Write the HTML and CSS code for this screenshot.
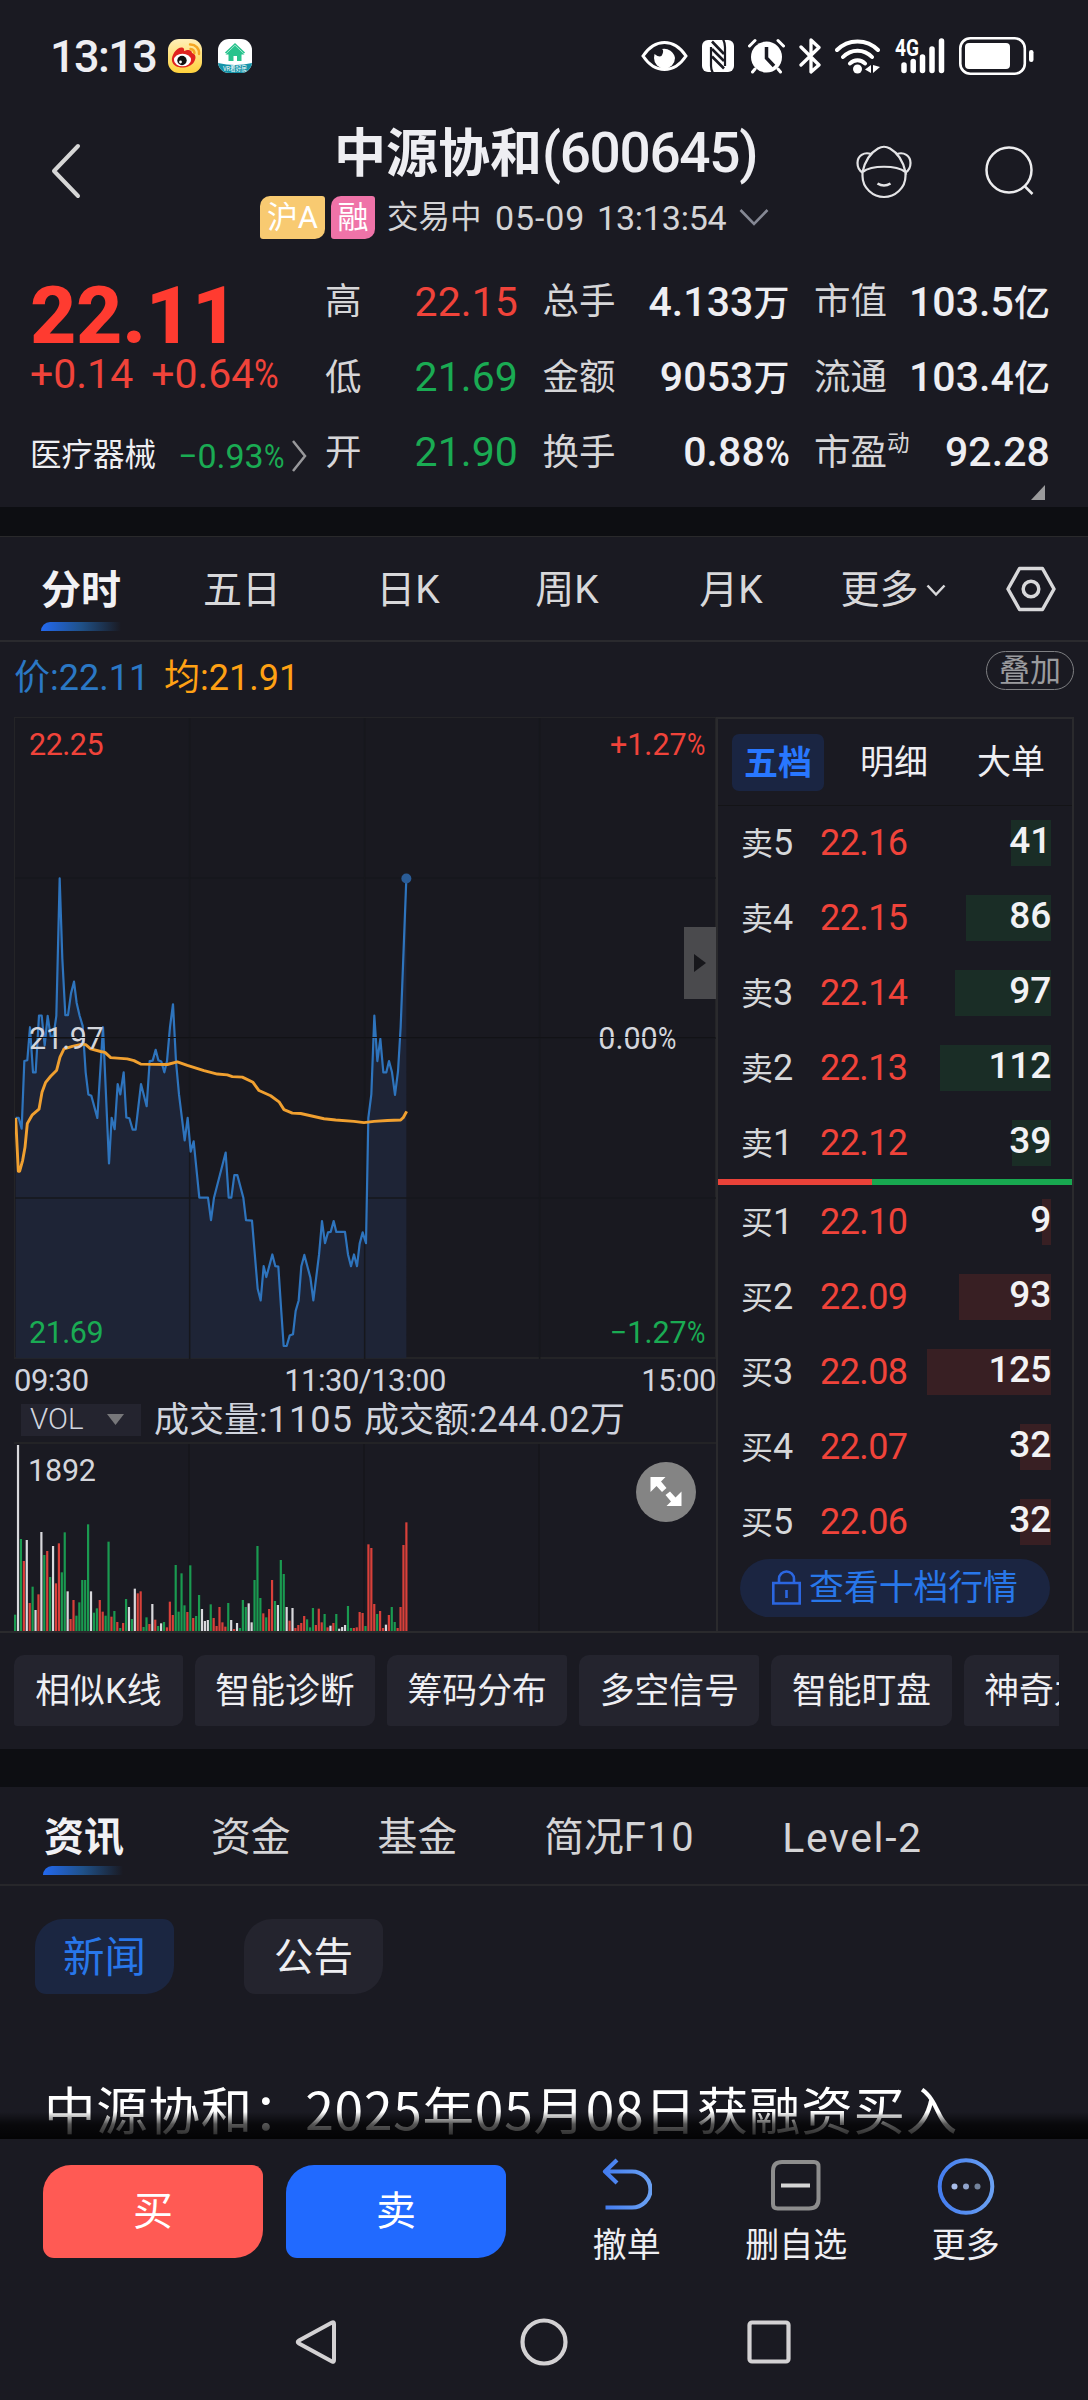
FILE: index.html
```html
<!DOCTYPE html>
<html lang="zh-CN">
<head>
<meta charset="utf-8">
<title>中源协和(600645)</title>
<link rel="stylesheet" href="styles.css">
</head>
<body>
<div class="phone">
  <div class="status">
    <span class="clock">13:13</span>
    <svg class="app" width="34" height="34" viewBox="0 0 34 34">
      <defs><linearGradient id="wb" x1="0" y1="0" x2="0" y2="1"><stop offset="0" stop-color="#ffefb8"/><stop offset="1" stop-color="#ffd23c"/></linearGradient></defs>
      <rect width="34" height="34" rx="11" fill="url(#wb)"/>
      <path d="M4 22C3 16 9 8 14 8.500C17 9 16 12 16 12C19 10.500 24 10 24 14C28 15 28.500 19 26 23C22 30 6 31 4 22Z" fill="#e0231f"/>
      <ellipse cx="14.500" cy="21" rx="8.500" ry="6.300" fill="#fff"/><circle cx="14" cy="21.500" r="4.700" fill="#111"/><circle cx="12.500" cy="23" r="1.400" fill="#fff"/>
      <path d="M22 5.500A8.500 8.500 0 0 1 31 15M22.500 10A4.500 4.500 0 0 1 26.500 14" fill="none" stroke="#f5a623" stroke-width="2.400" stroke-linecap="round"/>
    </svg>
    <svg class="app" width="34" height="34" viewBox="0 0 34 34">
      <clipPath id="hc"><rect width="34" height="34" rx="11"/></clipPath>
      <g clip-path="url(#hc)"><rect width="34" height="34" fill="#fff"/><path d="M0 24Q17 28 34 24V34H0Z" fill="#1593a8"/>
      <path d="M17 6.500L26.500 15.500H23.500V22H19V17H15.500V22H10.500V15.500H7.500Z" fill="#28c38d"/><path d="M7.500 14L17 5L26.500 14" fill="none" stroke="#28c38d" stroke-width="1.600"/>
      <text x="17" y="32" text-anchor="middle" class="tiny" textLength="24" lengthAdjust="spacingAndGlyphs">VR看好房</text></g>
    </svg>
    <div class="sys">
      <svg width="47" height="34" viewBox="0 0 47 34" fill="none" stroke="#fff" stroke-width="3"><path d="M2 17C8 8 15 3.500 23.500 3.500S39 8 45 17C39 26 32 30.500 23.500 30.500S8 26 2 17Z"/><path d="M21 10A11 11 0 0 1 34 19A10.500 10.500 0 0 1 13 19L13.500 15Q20 20 21.500 15Q23 11 21 10Z" fill="#fff" stroke="none"/></svg>
      <svg width="32" height="34" viewBox="0 0 32 34"><rect y="1" width="32" height="32" rx="6" fill="#fff"/><path d="M9 8V27Q9 31 11 34M23 27V8Q23 4 21 0" fill="none" stroke="#1a1a22" stroke-width="2.200"/><path d="M10 2.500L22 15M10 10L22 22M10 17.500L22 29.500" stroke="#1a1a22" stroke-width="2.600"/></svg>
      <svg width="37" height="36" viewBox="0 0 37 36"><circle cx="18.500" cy="19" r="15.500" fill="#fff"/><path d="M1.500 8L7 2.500M35.500 8L30 2.500M7 31L4.500 34M30 31L32.500 34" stroke="#fff" stroke-width="3" stroke-linecap="round"/><path d="M18.500 9V20L26 28" fill="none" stroke="#1a1a22" stroke-width="3.500"/></svg>
      <svg width="22" height="36" viewBox="0 0 22 36" fill="none" stroke="#fff" stroke-width="3.300" stroke-linejoin="round" stroke-linecap="round"><path d="M2 9L20 27L12 34V2L20 9.500L2 27"/></svg>
      <svg width="45" height="36" viewBox="0 0 45 36" fill="none" stroke="#fff" stroke-width="4" stroke-linecap="round"><path d="M2 12C13 .5 32 .5 43 12M8 19C16 10.500 29 10.500 37 19M15 25.500C19 21 26 21 30 25.500"/><circle cx="22.500" cy="31" r="4.500" fill="#fff" stroke="none"/><path d="M30 31.500L36 27V35ZM45 29L38 35V27Z" fill="#fff" stroke="none"/></svg>
      <svg width="51" height="36" viewBox="0 0 51 36"><text x="1" y="18" class="net" textLength="24" lengthAdjust="spacingAndGlyphs">4G</text><path d="M10 27V32.500M19.200 23.500V32.500M28.500 19V32.500M38 11V32.500M47.500 3V32.500" stroke="#fff" stroke-width="5.500" stroke-linecap="round"/></svg>
      <svg width="75" height="38" viewBox="0 0 75 38"><rect x="1.300" y="1.300" width="64.500" height="35.400" rx="10" fill="none" stroke="#fff" stroke-width="2.600"/><rect x="6" y="6" width="45" height="26" rx="4" fill="#fff"/><rect x="70" y="13" width="4.500" height="12" rx="2.200" fill="#fff"/></svg>
    </div>
  </div>

  <header class="head">
    <svg class="back" width="32" height="58" viewBox="0 0 32 58"><path d="M28 4L4 29L28 54" fill="none" stroke="#d6d6d6" stroke-width="4" stroke-linecap="round" stroke-linejoin="round"/></svg>
    <div class="title">
      <h1>中源协和<span>(600645)</span></h1>
      <div class="sub">
        <b class="tag yellow">沪A</b><b class="tag pink">融</b>
        <span class="state">交易中</span><span class="dt">05-09</span><span class="dt2">13:13:54</span>
        <svg width="30" height="20" viewBox="0 0 30 20"><path d="M1.500 2L15 16L28.500 2" fill="none" stroke="#858894" stroke-width="2.600"/></svg>
      </div>
    </div>
    <svg class="monkey" width="56" height="54" viewBox="0 0 56 54" fill="none" stroke="#e4e4e6" stroke-width="2.200"><path d="M6.500 27C9 16 15 7.500 22 3.500Q28 0 34 3.500C41 7.500 47 16 49.500 27C40 20 16 20 6.500 27V31C6.500 43 17 52 28 52S49.500 43 49.500 31V27"/><path d="M15 9C8 6.500 1.500 11 1.500 18C1.500 23 4 26 6.500 27.500M41 9C48 6.500 54.500 11 54.500 18C54.500 23 52 26 49.500 27.500"/><path d="M21.500 38.500Q28 42.500 34.500 38.500" stroke-width="2.600"/></svg>
    <svg class="search" width="50" height="50" viewBox="0 0 50 50" fill="none" stroke="#ececee" stroke-width="2.500"><circle cx="24" cy="25" r="22.500"/><path d="M39.500 41L47.500 49"/></svg>
  </header>

  <section class="quote">
    <div class="last">
      <div class="big">22.11</div>
      <div class="chg up"><span>+0.14</span><span>+0.64<i class="pct">%</i></span></div>
      <div class="sector"><span class="name">医疗器械</span><span class="dn">−0.93<i class="pct">%</i></span><svg width="16" height="32" viewBox="0 0 16 32"><path d="M2 1L14 16L2 31" fill="none" stroke="#98989b" stroke-width="2.500"/></svg></div>
    </div>
    <div class="stats">
      <div><span>高</span><b class="up">22.15</b></div><div><span>总手</span><b>4.133<em>万</em></b></div><div><span>市值</span><b>103.5<em>亿</em></b></div>
      <div><span>低</span><b class="dn">21.69</b></div><div><span>金额</span><b>9053<em>万</em></b></div><div><span>流通</span><b>103.4<em>亿</em></b></div>
      <div><span>开</span><b class="dn">21.90</b></div><div><span>换手</span><b>0.88<i class="pct">%</i></b></div><div><span>市盈<sup>动</sup></span><b>92.28</b></div>
    </div>
    <svg class="corner" width="14" height="15" viewBox="0 0 14 15"><path d="M14 0V15H0Z" fill="#9a9a9c"/></svg>
  </section>

  <nav class="periods">
    <span class="on">分时</span><span>五日</span><span>日K</span><span>周K</span><span>月K</span>
    <span class="more">更多<svg width="20" height="13" viewBox="0 0 20 13"><path d="M1.500 1.500L10 10.500L18.500 1.500" fill="none" stroke="#d8d8da" stroke-width="2.500"/></svg></span>
    <span class="gear"><svg width="50" height="46" viewBox="0 0 50 46" fill="none" stroke="#d8d8da" stroke-width="3.500"><path d="M13.500 2.500H36.500L48 23L36.500 43.500H13.500L2 23Z" stroke-linejoin="round"/><circle cx="25" cy="23" r="7.800"/></svg></span>
  </nav>

  <section class="market">
    <div class="legend"><span class="price">价:22.11</span><span class="avg">均:21.91</span><button class="overlay">叠加</button></div>
    <div class="panel">
      <div class="left">
        <div class="chart">
          <svg class="plot" viewBox="43 40 2103 1478" preserveAspectRatio="none">
            <path fill="#1e2436" d="M45 962L54 962 63 987 71 831 80 829 88 753 97 857 105 857 115 726 123 726 132 795 141 727 150 774 158 775 167 727 177 410 185 595 194 725 202 725 211 675 220 648 228 697 237 727 246 750 255 857 263 908 272 911 290 962 307 753 325 1067 333 962 342 988 351 884 359 908 369 857 377 961 386 963 396 989 405 989 421 884 438 935 447 831 456 830 465 805 473 829 482 832 491 857 499 831 508 752 517 700 526 832 535 908 552 1014 561 962 570 1040 579 1016 596 1146 622 1146 631 1198 640 1146 675 1042 684 1146 692 1146 701 1094 710 1094 728 1146 736 1198 754 1199 771 1356 780 1383 789 1304 797 1329 815 1277 824 1304 833 1305 842 1410 849 1488 858 1488 867 1464 877 1461 885 1407 894 1383 902 1304 911 1278 929 1330 938 1383 955 1278 964 1200 973 1251 982 1226 990 1225 999 1200 1007 1225 1033 1225 1042 1277 1051 1304 1060 1277 1069 1304 1077 1252 1086 1226 1096 1251 1103 962 1112 908 1121 726 1130 831 1139 780 1148 857 1157 857 1165 831 1174 857 1183 909 1192 855 1200 752 1217 410V1516H45Z"/>
            <path class="line" stroke="#16171c" stroke-width="1.500" d="M43 409H2146M43 778H2146M43 1147H2146M567 40V1518M1092 40V1518M1617 40V1518"/>
            <path class="line" stroke="#2e74bd" stroke-width="2.200" d="M45 962L54 962 63 987 71 831 80 829 88 753 97 857 105 857 115 726 123 726 132 795 141 727 150 774 158 775 167 727 177 410 185 595 194 725 202 725 211 675 220 648 228 697 237 727 246 750 255 857 263 908 272 911 290 962 307 753 325 1067 333 962 342 988 351 884 359 908 369 857 377 961 386 963 396 989 405 989 421 884 438 935 447 831 456 830 465 805 473 829 482 832 491 857 499 831 508 752 517 700 526 832 535 908 552 1014 561 962 570 1040 579 1016 596 1146 622 1146 631 1198 640 1146 675 1042 684 1146 692 1146 701 1094 710 1094 728 1146 736 1198 754 1199 771 1356 780 1383 789 1304 797 1329 815 1277 824 1304 833 1305 842 1410 849 1488 858 1488 867 1464 877 1461 885 1407 894 1383 902 1304 911 1278 929 1330 938 1383 955 1278 964 1200 973 1251 982 1226 990 1225 999 1200 1007 1225 1033 1225 1042 1277 1051 1304 1060 1277 1069 1304 1077 1252 1086 1226 1096 1251 1103 962 1112 908 1121 726 1130 831 1139 780 1148 857 1157 857 1165 831 1174 857 1183 909 1192 855 1200 752 1217 410"/>
            <path class="line" stroke="#f0a030" stroke-width="2.900" d="M45 962L53 1085 57 1085 66 1060 73 1030 80 975 95 955 115 942 124 903 135 880 150 866 168 852 178 822 190 803 215 797 245 792 255 793 270 803 300 809 313 811 330 823 380 826 400 830 420 838 500 839 530 833 560 841 610 853 650 861 680 863 695 867 725 868 757 880 775 899 810 911 835 925 850 943 875 951 900 952 970 964 1005 967 1060 970 1090 973 1120 970 1160 968 1200 967 1208 961 1218 947"/>
            <ellipse cx="1217" cy="410" rx="15" ry="11.500" fill="#2a5c96"/>
          </svg>
          <span class="lab tl up">22.25</span><span class="lab ml">21.97</span><span class="lab bl dn">21.69</span>
          <span class="lab tr up">+1.27<i class="pct">%</i></span><span class="lab mr">0.00<i class="pct">%</i></span><span class="lab br dn">−1.27<i class="pct">%</i></span>
          <span class="zero"></span>
          <span class="handle"><svg width="12" height="18" viewBox="0 0 12 18"><path d="M0 0L12 9L0 18Z" fill="#17171b"/></svg></span>
        </div>
        <div class="times"><span>09:30</span><span>11:30/13:00</span><span>15:00</span></div>
        <div class="volhead"><span class="sel">VOL<svg width="17" height="11" viewBox="0 0 17 11"><path d="M0 0H17L8.500 11Z" fill="#77777a"/></svg></span><span class="va">成交量:<b>1105</b></span><span>成交额:<b>244.02</b>万</span></div>
        <div class="volume">
          <svg id="bars" width="701" height="187" viewBox="0 0 701 187"><path d="M175 0V187M350 0V187M525 0V187" stroke="#16161a" stroke-width="1.400"/></svg>
          <span class="lab max">1892</span>
          <svg class="full" width="60" height="60" viewBox="0 0 60 60"><circle cx="30" cy="30" r="30" fill="#848484"/><path d="M14.500 15H29.500L25 19.500L30.500 26L26 30L20.500 24L14.500 30ZM45.500 44H30.500L35 39.500L29.500 33L34 29.500L39.500 35.500L45.500 29.500Z" fill="#fff"/></svg>
        </div>
      </div>
      <aside class="book">
        <div class="btabs"><span class="on">五档</span><span>明细</span><span>大单</span></div>
        <div class="rows ask">
          <div><span>卖<b>5</b></span><i>22.16</i><u style="--q:40px"><s>41</s></u></div>
          <div><span>卖<b>4</b></span><i>22.15</i><u style="--q:85px"><s>86</s></u></div>
          <div><span>卖<b>3</b></span><i>22.14</i><u style="--q:96px"><s>97</s></u></div>
          <div><span>卖<b>2</b></span><i>22.13</i><u style="--q:111px"><s>112</s></u></div>
          <div><span>卖<b>1</b></span><i>22.12</i><u style="--q:39px"><s>39</s></u></div>
        </div>
        <div class="ratio"></div>
        <div class="rows bid">
          <div><span>买<b>1</b></span><i>22.10</i><u style="--q:9px"><s>9</s></u></div>
          <div><span>买<b>2</b></span><i>22.09</i><u style="--q:92px"><s>93</s></u></div>
          <div><span>买<b>3</b></span><i>22.08</i><u style="--q:124px"><s>125</s></u></div>
          <div><span>买<b>4</b></span><i>22.07</i><u style="--q:31px"><s>32</s></u></div>
          <div><span>买<b>5</b></span><i>22.06</i><u style="--q:31px"><s>32</s></u></div>
        </div>
        <button class="ten"><svg width="29" height="35" viewBox="0 0 29 35" fill="none" stroke="#2b66e0" stroke-width="2.600"><path d="M1.300 13H27.700V33.500H1.300ZM7 13V9A7.500 7.500 0 0 1 22 9V13M14.500 20V28"/></svg>查看十档行情</button>
      </aside>
    </div>
  </section>

  <div class="chips"><span>相似K线</span><span>智能诊断</span><span>筹码分布</span><span>多空信号</span><span>智能盯盘</span><span>神奇九转</span></div>

  <nav class="info"><span class="on">资讯</span><span>资金</span><span>基金</span><span>简况<b>F10</b></span><span><b>Level-2</b></span></nav>
  <section class="news">
    <div class="pills"><span class="on">新闻</span><span>公告</span></div>
    <h2>中源协和：2025年05月08日获融资买入</h2>
  </section>

  <footer class="trade">
    <button class="buy">买</button><button class="sell">卖</button>
    <div class="acts">
      <div><svg width="50" height="58" viewBox="0 0 50 58"><defs><linearGradient id="bl" x1="0" x2="1"><stop offset="0" stop-color="#447df0"/><stop offset="1" stop-color="#6aa0f2"/></linearGradient></defs><path d="M15 3L3 14.500L15 26M3 14.500H30A18.500 18 0 0 1 30 50.500H3.500" fill="none" stroke="url(#bl)" stroke-width="4.200" stroke-linejoin="round"/></svg>撤单</div>
      <div><svg width="52" height="58" viewBox="0 0 52 58"><path d="M12 5H44Q48.500 5 48.500 9.500V42Q48.500 51.500 39 51.500H7.500Q3 51.500 3 47V14Q3 5 12 5Z" fill="none" stroke="#8d8d8d" stroke-width="4"/><path d="M11 28.500H40" stroke="#d5d5d5" stroke-width="4"/></svg>删自选</div>
      <div><svg width="58" height="58" viewBox="0 0 58 58"><circle cx="29" cy="29.500" r="26.300" fill="none" stroke="url(#bl)" stroke-width="4"/><circle cx="17.500" cy="29.500" r="3" fill="#a9bdea"/><circle cx="29" cy="29.500" r="3" fill="#90a3cb"/><circle cx="40.500" cy="29.500" r="3" fill="#73839c"/></svg>更多</div>
    </div>
  </footer>
  <div class="keys">
    <svg width="42" height="48" viewBox="0 0 42 48"><path d="M37 4.500Q39 3.500 39 6V42Q39 44.500 37 43.500L4 25.500Q1.500 24 4 22.500Z" fill="none" stroke="#d3d1d3" stroke-width="4"/></svg>
    <svg width="48" height="48" viewBox="0 0 48 48"><circle cx="24" cy="24" r="21.500" fill="none" stroke="#d3d1d3" stroke-width="4.200"/></svg>
    <svg width="44" height="44" viewBox="0 0 44 44"><rect x="2.500" y="2.500" width="39" height="39" rx="2.500" fill="none" stroke="#d3d1d3" stroke-width="4.200"/></svg>
  </div>
</div>
<script src="volume.js"></script>
</body>
</html>
```
FILE: styles.css
```css
* { box-sizing: border-box; margin: 0; padding: 0; }
html { overflow: hidden; }
body { width: 1088px; background: #1a1a22; color: #eeeef2; font-family: Roboto, "Noto Sans CJK SC", sans-serif; line-height: 1; }
.phone { width: 1088px; height: 2400px; overflow: hidden; display: flex; flex-direction: column; white-space: nowrap; }
.phone > * { flex: none; }
svg { display: block; flex: none; }
i, em, u, s { font-style: normal; text-decoration: none; }
button { border: 0; background: none; font: inherit; color: inherit; line-height: 1; }
.up { color: #f0433a !important; }
.dn { color: #1aab53 !important; }
.pct { display: inline-block; width: .6em; transform: scaleX(.82); transform-origin: 0 50%; }

.status { height: 112px; display: flex; align-items: center; padding-left: 50px; }
.clock { width: 118px; font-size: 45px; letter-spacing: -1.600px; font-weight: 500; }
.app { margin-right: 16px; }
.tiny { font-size: 7px; fill: #fff; }
.sys { display: flex; align-items: center; gap: 14px; margin-left: 373px; }
.net { font-size: 24px; font-weight: 700; fill: #fff; }

.head { height: 148px; position: relative; }
.back { position: absolute; left: 50px; top: 30px; }
.monkey { position: absolute; left: 856px; top: 33px; }
.search { position: absolute; left: 985px; top: 33px; }
.title { padding-top: 11px; }
.title h1 { height: 60px; line-height: 60px; padding-left: 334px; font-size: 52px; font-weight: 600; }
.title h1 span { font-size: 55px; font-weight: 500; letter-spacing: -1.350px; }
.sub { display: flex; align-items: center; height: 43px; margin-top: 13px; padding-left: 260px; color: #d4d4d6; }
.tag { height: 43px; line-height: 43px; color: #fff; font-size: 31px; font-weight: 400; text-align: center; border-radius: 10px 3px; margin-right: 6px; }
.yellow { width: 65px; background: #f8ca71; }
.pink { width: 44px; background: #ef73a8; }
.state { font-size: 31.500px; margin-left: 6px; width: 108px; }
.dt { font-size: 34px; width: 102px; letter-spacing: .9px; }
.dt2 { font-size: 34px; width: 142px; letter-spacing: -.2px; }

.quote { height: 247px; display: flex; position: relative; padding-left: 30px; }
.last { width: 295px; padding-top: 15px; }
.big { font-size: 80.500px; font-weight: 800; color: #ff3b30; height: 80px; line-height: 82px; letter-spacing: -.3px; }
.chg { display: flex; gap: 18px; font-size: 41px; height: 41px; line-height: 39px; }
.sector { display: flex; align-items: center; height: 34px; margin-top: 43px; font-size: 34px; }
.sector .name { font-size: 31.500px; width: 148px; }
.sector .dn { width: 113px; }
.stats { display: grid; grid-template-columns: 193px 247px 236px; grid-template-rows: repeat(3, 75.200px); column-gap: 24.500px; padding-top: 5px; }
.stats div { display: flex; justify-content: space-between; align-items: center; color: #d6d6d8; font-size: 36.500px; }
.stats b { font-size: 41px; font-weight: 500; color: #eeeef2; letter-spacing: .1px; }
.stats b.up, .stats b.dn { font-weight: 400; }
.stats em { font-size: 36px; letter-spacing: 0; }
.stats sup { font-size: 22.500px; vertical-align: 14px; line-height: 0; }
.corner { position: absolute; left: 1031px; top: 225px; }

.periods { height: 135px; border-top: 29px solid #0d0e12; display: grid; grid-template-columns: 162px 160px 172px 146px 182px 142px 124px; border-bottom: 2px solid #2a2a2e; box-shadow: inset 0 1px #29292b; font-size: 39px; color: #d8d8da; }
.periods span { display: flex; align-items: center; justify-content: center; position: relative; padding-top: 5px; }
.periods .more { gap: 7px; }
.periods .gear { padding: 1px 0 0 9px; }
.on { font-weight: 700; }
.periods .on, .info .on { font-size: 40px; color: #f1f1f4; }
.periods .on::after, .info .on::after { content: ""; position: absolute; left: 41px; top: 86px; width: 80px; height: 9px; border-radius: 9px 0 0 0; background: linear-gradient(90deg, #2369f0, #1f5189 50%, #1a1a2200); }

.legend { height: 75px; display: flex; padding: 9px 14px 0 14px; font-size: 36px; }
.legend .price, .legend .avg { height: 52px; line-height: 55px; width: 150px; color: #2b78c5; }
.legend .avg { color: #ffa114; }
.overlay { margin-left: auto; width: 88px; height: 39px; border: 1.500px solid #7e7f82; border-radius: 20px; color: #9a9b9e; font-size: 31px; }
.panel { display: flex; height: 916px; padding-left: 14px; border-bottom: 2px solid #2a2a2d; }
.left { width: 702px; }
.chart { position: relative; height: 642px; border: 1px solid #242427; border-bottom-width: 2px; background: #191920; }
.plot { position: absolute; inset: 0; width: 701px; height: 641px; }
.line { fill: none; vector-effect: non-scaling-stroke; stroke-linejoin: round; }
.lab { position: absolute; font-size: 30.500px; letter-spacing: -.5px; color: #d4d6dc; }
.tl { left: 14px; top: 12px; } .ml { left: 14px; top: 306px; } .bl { left: 14px; top: 600px; }
.tr { right: 10px; top: 12px; letter-spacing: 0; } .mr { right: 39px; top: 306px; letter-spacing: 0; } .br { right: 10px; top: 600px; letter-spacing: 0; }
.zero { position: absolute; left: 0; right: 0; top: 319px; height: 1px; background: #121216; }
.handle { position: absolute; right: -1px; top: 209px; width: 32px; height: 72px; background: #4a4a4d; display: grid; place-items: center; }
.times { height: 42px; display: flex; justify-content: space-between; align-items: center; font-size: 31px; color: #d0d4de; letter-spacing: -.5px; }
.volhead { height: 43px; display: flex; align-items: center; font-size: 35px; color: #d0d4de; border-bottom: 2px solid #232326; padding: 0 0 4px 7px; }
.volhead b { font-size: 36px; font-weight: 400; letter-spacing: .3px; }
.sel { width: 120px; height: 32px; background: #24242f; padding: 0 17px 0 9px; display: flex; align-items: center; justify-content: space-between; font-size: 29.500px; font-weight: 300; }
.va { margin-left: 13px; width: 210px; }
.volhead .va b { letter-spacing: 1.200px; }
.volume { position: relative; height: 187px; }
.volume .max { left: 14px; top: 12px; letter-spacing: -.2px; }
.full { position: absolute; right: 20px; top: 18px; }

.book { width: 358px; border: 2px solid #2a2a2d; border-bottom: 0; height: 914px; }
.btabs { height: 87px; display: grid; grid-template-columns: 92px 140px 94px; align-items: center; padding: 0 0 0 14px; border-bottom: 1px solid #141417; font-size: 34px; text-align: center; }
.btabs .on { height: 57px; line-height: 58px; border-radius: 7px; background: #1a2542; color: #2877ff; }
.rows > div { height: 74.800px; display: grid; grid-template-columns: 79px 1fr 130px; align-items: center; padding: 0 21px 0 23px; font-size: 32px; color: #d6d8da; }
.rows b { font-weight: 400; font-size: 36px; }
.rows i { color: #f0433a; font-size: 36px; letter-spacing: -.6px; }
.rows u { justify-self: end; display: flex; justify-content: flex-end; height: 46px; line-height: 41px; width: var(--q); background: #1a2d26; font-size: 37px; font-weight: 500; color: #f2f2f4; letter-spacing: -.2px; }
.bid u { background: #381f23; }
.ratio { height: 6px; margin: -1px 0 0; background: linear-gradient(90deg, #ea4239 154px, #18a850 154px); }
.ten { display: flex; align-items: center; justify-content: center; gap: 8px; width: 310px; height: 58px; margin: 0 0 0 22px; border-radius: 29px; background: #1b2541; color: #2877ea; font-size: 34.800px; }

.chips { height: 116px; width: 1059px; overflow: hidden; display: flex; gap: 12px; padding: 22px 0 0 14px; }
.chips span { flex: none; height: 71px; line-height: 72px; padding: 0 20.500px; background: #24242e; border-radius: 10px 3px; font-size: 34.800px; }
.chips span:first-child { padding: 0 21.300px; }

.info { height: 137px; border-top: 38px solid #0d0e12; border-bottom: 2px solid #27272b; display: flex; gap: 87px; padding-left: 44px; font-size: 39.800px; line-height: 102px; color: #d4d4d6; }
.info b { font-weight: 400; letter-spacing: 1.600px; }
.info span:last-child { font-size: 41px; }
.info .on { position: relative; }
.info .on::after { left: -1px; top: 79px; }
.news { height: 253px; position: relative; overflow: hidden; }
.pills { display: flex; gap: 70px; padding: 33px 0 0 35px; }
.pills span { width: 139px; height: 75px; line-height: 77px; text-align: center; font-size: 39.500px; background: #24242e; border-radius: 28px 11px; }
.pills .on { background: #1b2641; color: #2877ea; font-size: 41.500px; font-weight: 400; }
.news h2 { font: 400 51.500px/60px "Noto Sans CJK SC", sans-serif; letter-spacing: .75px; color: #fff; margin: 84px 0 0 44px; }
.news::after { content: ""; position: absolute; left: 0; right: 0; bottom: 0; height: 27px; background: linear-gradient(#0000, #000a 45%, #000d); }

.trade { height: 141px; display: flex; padding: 26px 0 0 43px; }
.trade button { width: 220px; height: 93px; border-radius: 28px 11px; font-size: 40px; color: #fff; margin-right: 23px; }
.buy { background: #ff5a54; }
.sell { background: #216aff; }
.acts { display: grid; grid-template-columns: repeat(3, 169.500px); margin: -8px 0 0 13px; height: 106px; }
.acts div { display: flex; flex-direction: column; align-items: center; gap: 13px; font-size: 34px; }
.keys { display: flex; align-items: center; height: 120px; padding: 3px 0 0 295px; }
.keys svg:nth-child(2) { margin: 0 179px 0 183px; }
```
FILE: volume.js
```js
// One entry per trading minute: g = down, r = up, w = unchanged, then the bar size.
const minutes = "g49 w558 g276 r210 w273 r84 g133 w63 r110 w297 g228 r240 g162 w255 r143 r263 g176 g296 w119 r36 r93 g46 g86 g153 g153 g320 w119 g55 g68 r93 r58 g46 g268 r43 g60 r27 g9 r24 g96 w72 g36 w127 r113 r119 g12 g41 r21 w81 r34 g15 w23 g27 r11 r88 r48 g198 g58 g173 g77 r57 g197 r39 g45 g108 w66 w30 w33 g80 r39 r15 r72 r26 r13 g84 w33 r6 w24 g9 g93 g72 w83 w26 g153 g255 g99 r53 g41 r66 r153 g90 w78 g213 g171 w72 r31 w69 r9 r18 r24 r45 g35 g11 g69 r18 r67 r26 g51 r11 w16 r24 g51 w7 w12 w18 g75 g9 r9 r11 r57 r54 g15 r260 r249 r81 g51 r60 r9 w19 r48 g72 g27 r9 r72 r258 r326".split(" ");
const colors = { g: "#1a9a50", r: "#d8403a", w: "#d8d8dc" };
const svg = document.getElementById("bars");
minutes.forEach((m, i) => {
  const bar = document.createElementNS("http://www.w3.org/2000/svg", "rect");
  const h = Number(m.slice(1)) / 3;
  bar.setAttribute("x", (i * 2.92).toFixed(2));
  bar.setAttribute("y", 187 - h);
  bar.setAttribute("width", 2.2);
  bar.setAttribute("height", h);
  bar.setAttribute("fill", colors[m[0]]);
  svg.appendChild(bar);
});
```
